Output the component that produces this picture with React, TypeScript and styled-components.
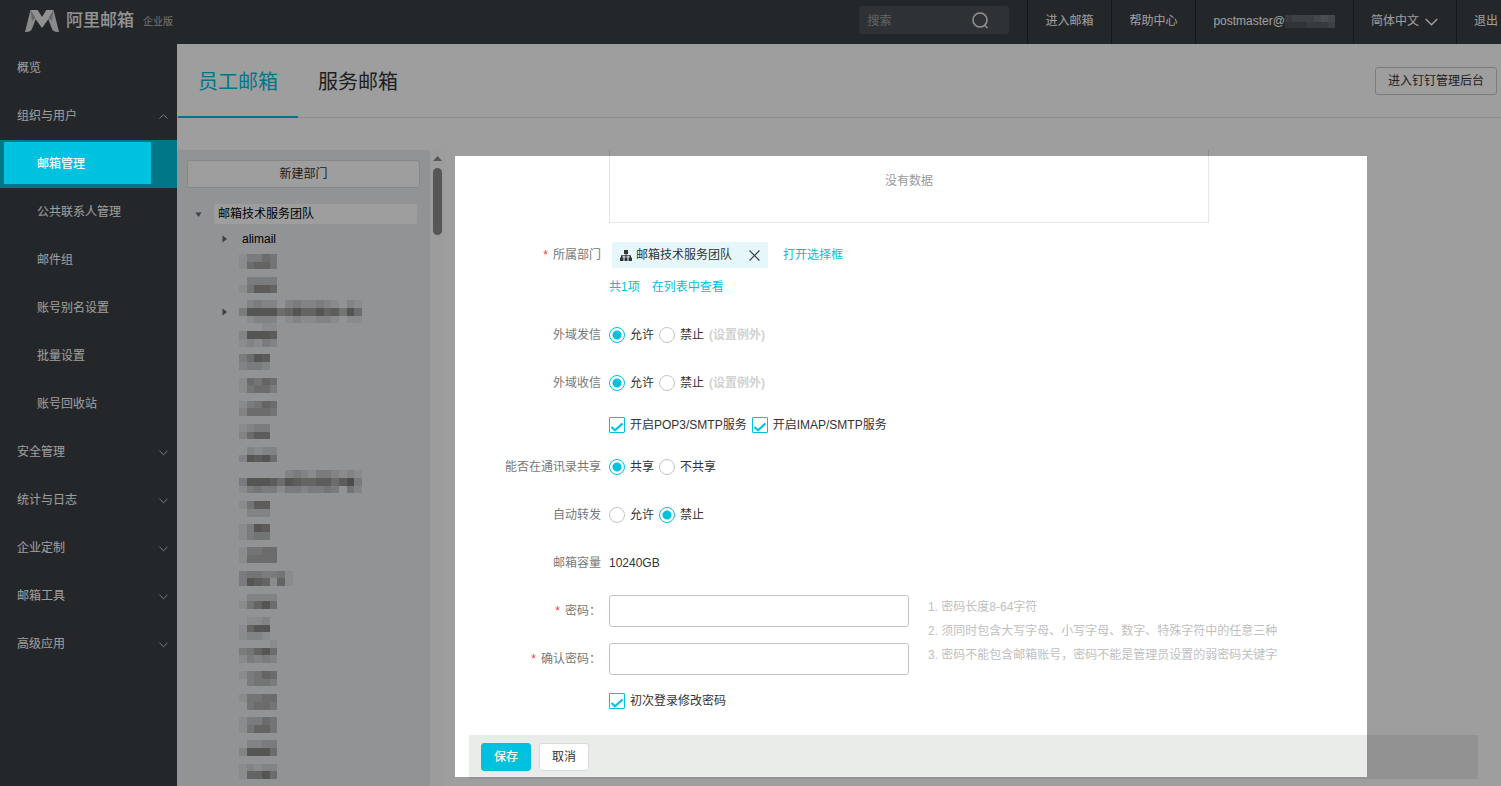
import React from 'react';
import styled, { createGlobalStyle, css } from 'styled-components';

const cyan = '#00c1de';

const GlobalStyle = createGlobalStyle`
  * { box-sizing: border-box; }
  body { margin: 0; }
  body, button, input {
    font-family: "Liberation Sans", "Noto Sans CJK SC", sans-serif;
    font-size: 12px;
    line-height: 16px;
    color: #333;
  }
  a { text-decoration: none; color: inherit; }
  ul, ol { list-style: none; margin: 0; padding: 0; }
`;

const Page = styled.div`
  position: relative;
  display: flex;
  flex-direction: column;
  height: 100vh;
  overflow: hidden;
  background: #fff;
`;

/* Guide mask: darkens everything except the active menu entry and the form. */
const GuideMask = styled.div`
  position: absolute;
  inset: 0;
  z-index: 10;
  pointer-events: none;
  background: rgba(0, 0, 0, 0.38);
  clip-path: polygon(
    evenodd,
    0 0, 100% 0, 100% 100%, 0 100%, 0 0,
    4px 142px, 151px 142px, 151px 184px, 4px 184px, 4px 142px, 0 0,
    455px 156px, calc(100% - 134px) 156px, calc(100% - 134px) calc(100% - 9px),
    455px calc(100% - 9px), 455px 156px, 0 0
  );
`;

const TopBar = styled.header`
  display: flex;
  flex: none;
  height: 44px;
  padding-left: 24px;
  background: #3a4045;
  color: #fff;
`;

const Brand = styled.a`
  display: flex;
  align-items: center;
  margin-right: auto;
  padding-bottom: 2px;
  color: #eee;
`;

const BrandName = styled.span`
  margin: 0 9px 0 6px;
  font-size: 17px;
  font-weight: 500;
  line-height: 24px;
`;

const Edition = styled.span`
  padding-top: 2px;
  font-size: 10px;
  color: #bbb;
`;

const SearchBox = styled.label`
  display: flex;
  align-items: center;
  width: 150px;
  height: 28px;
  margin: 6px 18px 0 0;
  padding: 0 20px 0 8px;
  border-radius: 3px;
  background: #4c5256;
`;

const SearchInput = styled.input`
  flex: 1;
  min-width: 0;
  padding: 2px 0 0;
  border: 0;
  background: none;
  color: #fff;
  &::placeholder { color: #a0a4a7; opacity: 1; }
`;

const TopLink = styled.a<{ $last?: boolean }>`
  display: flex;
  align-items: center;
  padding: 0 ${p => (p.$last ? 3 : 18)}px 2px 17px;
  border-left: 1px solid #25292c;
  white-space: nowrap;
`;

const Language = styled.span`
  margin-right: 6px;
`;

const Body = styled.div`
  display: flex;
  flex: 1;
  min-height: 0;
`;

const Sidebar = styled.nav`
  flex: none;
  width: 177px;
  background: #3a4045;
`;

const NavItem = styled.a<{ $sub?: boolean; $active?: boolean }>`
  display: flex;
  align-items: center;
  justify-content: space-between;
  height: 48px;
  padding: 0 9px 0 ${p => (p.$sub ? 37 : 17)}px;
  color: #fff;
  background: ${p => (p.$active ? cyan : 'transparent')};
  font-weight: ${p => (p.$active ? 500 : 400)};
`;

const Main = styled.main`
  display: flex;
  flex-direction: column;
  flex: 1;
  min-width: 0;
`;

const TabBar = styled.div`
  display: flex;
  flex: none;
  height: 74px;
  padding-right: 4px;
  padding-left: 1px;
  border-bottom: 1px solid #e6e6e6;
`;

const Tab = styled.a<{ $active?: boolean }>`
  display: flex;
  align-items: center;
  height: 74px;
  padding: 3px 20px 0;
  border-bottom: 2px solid ${p => (p.$active ? cyan : 'transparent')};
  color: ${p => (p.$active ? cyan : '#333')};
  font-size: 20px;
  line-height: 28px;
`;

const Button = styled.button<{ $primary?: boolean; $plain?: boolean }>`
  height: 28px;
  padding: 0 12px;
  border: 1px solid ${p => (p.$plain ? '#c8c8c8' : '#d8dadb')};
  border-radius: 3px;
  background: #fff;
  ${p => p.$primary && css`
    border-color: ${cyan};
    background: ${cyan};
    color: #fff;
    font-weight: 500;
  `}
`;

const ConsoleButton = styled(Button)`
  margin: 23px 0 0 auto;
`;

const Workspace = styled.div`
  display: flex;
  flex: 1;
  min-height: 0;
  margin-top: 32px;
`;

const TreePanel = styled.aside`
  flex: none;
  width: 253px;
  padding: 10px 10px 0;
  overflow: hidden;
  background: #eaedf1;
`;

const NewDepartment = styled(Button)`
  width: 100%;
`;

const Tree = styled.div`
  display: flex;
  flex-direction: column;
  gap: 1px;
  margin: 14px 3px 0 0;
`;

const TreeRow = styled.div<{ $child?: boolean }>`
  display: flex;
  align-items: center;
  gap: ${p => (p.$child ? 10 : 12)}px;
  height: 24px;
  padding-left: ${p => (p.$child ? 34 : 8)}px;
`;

const NodeName = styled.span<{ $selected?: boolean }>`
  flex: 1;
  height: 20px;
  padding: 0 4px;
  border-radius: 2px;
  line-height: 20px;
  color: #000;
  background: ${p => (p.$selected ? '#fff' : 'transparent')};
`;

const HiddenNodes = styled.div`
  display: flex;
  align-items: flex-start;
  padding: 2px 0 0 34px;
`;

const HiddenArrow = styled.div`
  width: 18px;
  padding-top: 50px;
`;

const ScrollTrack = styled.div`
  display: flex;
  flex: none;
  flex-direction: column;
  align-items: center;
  gap: 7px;
  width: 15px;
  padding-top: 6px;
  background: #fcfcfc;
`;

const ScrollThumb = styled.div`
  width: 9px;
  height: 67px;
  border-radius: 5px;
  background: #8b8b8b;
`;

const FormPane = styled.form`
  display: flex;
  flex: 1;
  flex-direction: column;
  min-width: 0;
`;

const EmptyTable = styled.div`
  width: 600px;
  height: 73px;
  margin: 0 0 16px 164px;
  padding-top: 23px;
  border: 1px solid #e6e6e6;
  border-top: 0;
  color: #999;
  text-align: center;
`;

const Row = styled.div<{ $tight?: boolean; $short?: boolean }>`
  display: flex;
  align-items: center;
  height: ${p => (p.$short ? 20 : 32)}px;
  margin-bottom: ${p => (p.$tight ? 0 : 16)}px;
`;

const labelColumn = css`
  flex: none;
  width: 156px;
  margin-right: 8px;
  color: #777;
  text-align: right;
`;

const FieldName = styled.span`${labelColumn}`;
const FieldLabel = styled.label`${labelColumn}`;

const Required = styled.span`
  margin-right: 5px;
  color: #f04134;
`;

const Link = styled.a<{ $gap?: number }>`
  margin-left: ${p => p.$gap ?? 0}px;
  color: ${cyan};
`;

const Chip = styled.span`
  display: flex;
  align-items: center;
  height: 26px;
  margin-left: 3px;
  padding: 0 8px;
  border-radius: 2px;
  background: #e5f7fb;
`;

const ChipText = styled.span`
  margin: 0 17px 0 4px;
`;

const ChipClose = styled.button`
  display: flex;
  padding: 0;
  border: 0;
  background: none;
`;

const Choice = styled.label`
  display: flex;
  align-items: center;
  gap: 5px;
  margin-right: 5px;
`;

const Radio = styled.input.attrs({ type: 'radio' })`
  appearance: none;
  width: 16px;
  height: 16px;
  margin: 0;
  border: 1px solid #c4c4c4;
  border-radius: 50%;
  background: #fff;
  &:checked {
    border-color: ${cyan};
    background: radial-gradient(circle, ${cyan} 4px, #fff 5px);
  }
`;

const CheckFrame = styled.span`
  display: grid;
  width: 16px;
  height: 16px;
  & > * { grid-area: 1 / 1; }
  & > svg { pointer-events: none; }
`;

const CheckInput = styled.input.attrs({ type: 'checkbox' })`
  appearance: none;
  width: 16px;
  height: 16px;
  margin: 0;
  border: 1px solid ${cyan};
  border-radius: 1px;
  background: #fff;
`;

const Exception = styled.span`
  color: #d2d2d2;
  font-weight: 700;
`;

const PasswordArea = styled.div`
  display: flex;
`;

const PasswordInput = styled.input.attrs({ type: 'password' })`
  width: 300px;
  height: 32px;
  padding: 0 8px;
  border: 1px solid #c4c4c4;
  border-radius: 3px;
  background: #fff;
`;

const Hints = styled.ol`
  margin-left: 19px;
  color: #c0c0c0;
  line-height: 24px;
`;

const FormFooter = styled.footer`
  display: flex;
  gap: 8px;
  height: 44px;
  margin: 8px 23px 0 24px;
  padding: 8px 12px;
  background: #eaecea;
`;

/* Shade digits per cell of the pixelated department names, three bands a name. */
const hiddenNames = [
  '13354', '15664', '',
  '03333', '14776', '',
  '0232202322321021', '3888856866867485', '0122201211221011',
  '00011', '28887', '12132', '',
  '3587', '2332', '',
  '15465', '14553', '',
  '13465', '25554', '',
  '1233', '2577', '',
  '02122', '28785', '',
  '0000002321332121', '3888758766775793', '1343313323343042',
  '', '1477', '0222', '',
  '1387', '1344', '',
  '14455', '15555', '',
  '3443341', '3876161', '',
  '02222', '14685', '',
  '0112', '1688', '1221',
  '00001', '34685', '13232', '',
  '13465', '03443', '',
  '14455', '04554', '',
  '13354', '14664', '',
  '02233', '28885', '',
  '12122', '16685',
];

const hiddenAccount = ['3444565', '2223334'];

function Mosaic({ rows, width, height, fill }: { rows: string[]; width: number; height: number; fill: string }) {
  const cols = Math.max(...rows.map(r => r.length));
  return (
    <svg width={width} height={height} viewBox={`0 0 ${cols} ${rows.length}`} preserveAspectRatio="none" shapeRendering="crispEdges" aria-hidden="true">
      {rows.flatMap((row, y) =>
        row.split('').map((shade, x) =>
          shade === '0' ? null : (
            <rect key={`${x}-${y}`} x={x} y={y} width="1" height="1" fill={fill} fillOpacity={Number(shade) * 0.055} />
          ),
        ),
      )}
    </svg>
  );
}

function Chevron({ up, size = 9, color = '#ccc' }: { up?: boolean; size?: number; color?: string }) {
  return (
    <svg width={size} height={size} viewBox="0 0 9 9" fill="none" stroke={color} strokeWidth="1" aria-hidden="true">
      <path d={up ? 'M.5 6.5 4.5 2.8l4 3.7' : 'M.5 2.8 4.5 6.700l4-3.900'} />
    </svg>
  );
}

function Arrow({ open }: { open?: boolean }) {
  return (
    <svg width="7" height="8" viewBox="0 0 7 8" fill="#666" aria-hidden="true">
      <path d={open ? 'M.5 2.500h6L3.500 7z' : 'M1.500 .5 6 4 1.500 7.500z'} />
    </svg>
  );
}

function Checkbox({ children }: { children: React.ReactNode }) {
  return (
    <Choice>
      <CheckFrame>
        <CheckInput defaultChecked />
        <svg width="16" height="16" viewBox="0 0 16 16" fill="none" stroke={cyan} strokeWidth="2.200" aria-hidden="true">
          <path d="M2.500 10 6 13.200 13.500 6.500" />
        </svg>
      </CheckFrame>
      <span>{children}</span>
    </Choice>
  );
}

function RadioRow({ label, name, options, selected, exception }: {
  label: string; name: string; options: string[]; selected: number; exception?: boolean;
}) {
  return (
    <Row role="radiogroup" aria-label={label}>
      <FieldName>{label}</FieldName>
      {options.map((option, i) => (
        <Choice key={option}>
          <Radio name={name} defaultChecked={i === selected} />
          <span>{option}</span>
        </Choice>
      ))}
      {exception && <Exception>(设置例外)</Exception>}
    </Row>
  );
}

const navItems: { text: string; sub?: boolean; active?: boolean; fold?: 'up' | 'down' }[] = [
  { text: '概览' },
  { text: '组织与用户', fold: 'up' },
  { text: '邮箱管理', sub: true, active: true },
  { text: '公共联系人管理', sub: true },
  { text: '邮件组', sub: true },
  { text: '账号别名设置', sub: true },
  { text: '批量设置', sub: true },
  { text: '账号回收站', sub: true },
  { text: '安全管理', fold: 'down' },
  { text: '统计与日志', fold: 'down' },
  { text: '企业定制', fold: 'down' },
  { text: '邮箱工具', fold: 'down' },
  { text: '高级应用', fold: 'down' },
];

export default function App() {
  return (
    <Page>
      <GlobalStyle />
      <TopBar>
        <Brand href="#">
          <svg width="36" height="24" viewBox="0 0 36 24" aria-hidden="true">
            <path d="M6.500 1 1 23q4.500.5 6.500-2L12 9.500z" fill="#dcdfe0" />
            <path d="M29.500 1 35 23q-4.500.5-6.500-2L24 9.500z" fill="#dcdfe0" />
            <path d="M6.500 1h7.200L18 8l4.300-7h7.200Q25 10.500 18 19 11 10.500 6.500 1z" fill="#e8eaea" />
            <path d="M6.500 1 8 12l3.500-3zM29.500 1 28 12l-3.500-3z" fill="#a4a8aa" />
          </svg>
          <BrandName>阿里邮箱</BrandName>
          <Edition>企业版</Edition>
        </Brand>
        <SearchBox>
          <SearchInput placeholder="搜索" aria-label="搜索" />
          <svg width="18" height="18" viewBox="0 0 18 18" fill="none" stroke="#eee" strokeWidth="1.500" aria-hidden="true">
            <circle cx="9" cy="9" r="7" />
            <path d="m13.500 14 3 3" />
          </svg>
        </SearchBox>
        <TopLink href="#">进入邮箱</TopLink>
        <TopLink href="#">帮助中心</TopLink>
        <TopLink href="#">
          postmaster@
          <Mosaic rows={hiddenAccount} width={50} height={13} fill="#fff" />
        </TopLink>
        <TopLink href="#">
          <Language>简体中文</Language>
          <Chevron size={13} color="#fff" />
        </TopLink>
        <TopLink href="#" $last>退出</TopLink>
      </TopBar>
      <Body>
        <Sidebar>
          {navItems.map(item => (
            <NavItem key={item.text} href="#" $sub={item.sub} $active={item.active}>
              {item.text}
              {item.fold && <Chevron up={item.fold === 'up'} />}
            </NavItem>
          ))}
        </Sidebar>
        <Main>
          <TabBar>
            <Tab href="#" $active>员工邮箱</Tab>
            <Tab href="#">服务邮箱</Tab>
            <ConsoleButton $plain>进入钉钉管理后台</ConsoleButton>
          </TabBar>
          <Workspace>
            <TreePanel>
              <NewDepartment>新建部门</NewDepartment>
              <Tree>
                <TreeRow><Arrow open /><NodeName $selected>邮箱技术服务团队</NodeName></TreeRow>
                <TreeRow $child><Arrow /><NodeName>alimail</NodeName></TreeRow>
                <HiddenNodes>
                  <HiddenArrow><Arrow /></HiddenArrow>
                  <Mosaic rows={hiddenNames} width={123} height={525} fill="#100800" />
                </HiddenNodes>
              </Tree>
            </TreePanel>
            <ScrollTrack>
              <svg width="9" height="5" viewBox="0 0 9 5" fill="#8b8b8b" aria-hidden="true"><path d="M0 5 4.500 0 9 5z" /></svg>
              <ScrollThumb />
            </ScrollTrack>
            <FormPane>
              <EmptyTable>没有数据</EmptyTable>
              <Row $tight>
                <FieldName><Required>*</Required>所属部门</FieldName>
                <Chip>
                  <svg width="12" height="12" viewBox="0 0 12 12" fill="#333" aria-hidden="true">
                    <path d="M4 1h4v4H6.500v1.200H11v2.300h1V12H8.500V8.500h1V7.200h-3v1.300h1V12h-3V8.500h1V7.200h-3v1.300h1V12H0V8.500h1V6.200h4.500V5H4z" />
                  </svg>
                  <ChipText>邮箱技术服务团队</ChipText>
                  <ChipClose type="button" aria-label="移除">
                    <svg width="11" height="11" viewBox="0 0 11 11" stroke="#444" strokeWidth="1.200" aria-hidden="true">
                      <path d="m.5.5 10 10M10.500.5l-10 10" />
                    </svg>
                  </ChipClose>
                </Chip>
                <Link href="#" $gap={15}>打开选择框</Link>
              </Row>
              <Row>
                <FieldName />
                <Link href="#">共1项</Link>
                <Link href="#" $gap={12}>在列表中查看</Link>
              </Row>
              <RadioRow label="外域发信" name="send" options={['允许', '禁止']} selected={0} exception />
              <RadioRow label="外域收信" name="receive" options={['允许', '禁止']} selected={0} exception />
              <Row $short>
                <FieldName />
                <Checkbox>开启POP3/SMTP服务</Checkbox>
                <Checkbox>开启IMAP/SMTP服务</Checkbox>
              </Row>
              <RadioRow label="能否在通讯录共享" name="share" options={['共享', '不共享']} selected={0} />
              <RadioRow label="自动转发" name="forward" options={['允许', '禁止']} selected={1} />
              <Row>
                <FieldName>邮箱容量</FieldName>
                <span>10240GB</span>
              </Row>
              <PasswordArea>
                <div>
                  <Row>
                    <FieldLabel htmlFor="password"><Required>*</Required>密码：</FieldLabel>
                    <PasswordInput id="password" />
                  </Row>
                  <Row>
                    <FieldLabel htmlFor="confirm"><Required>*</Required>确认密码：</FieldLabel>
                    <PasswordInput id="confirm" />
                  </Row>
                </div>
                <Hints>
                  <li>1. 密码长度8-64字符</li>
                  <li>2. 须同时包含大写字母、小写字母、数字、特殊字符中的任意三种</li>
                  <li>3. 密码不能包含邮箱账号，密码不能是管理员设置的弱密码关键字</li>
                </Hints>
              </PasswordArea>
              <Row $short>
                <FieldName />
                <Checkbox>初次登录修改密码</Checkbox>
              </Row>
              <FormFooter>
                <Button type="button" $primary>保存</Button>
                <Button type="button">取消</Button>
              </FormFooter>
            </FormPane>
          </Workspace>
        </Main>
      </Body>
      <GuideMask />
    </Page>
  );
}
